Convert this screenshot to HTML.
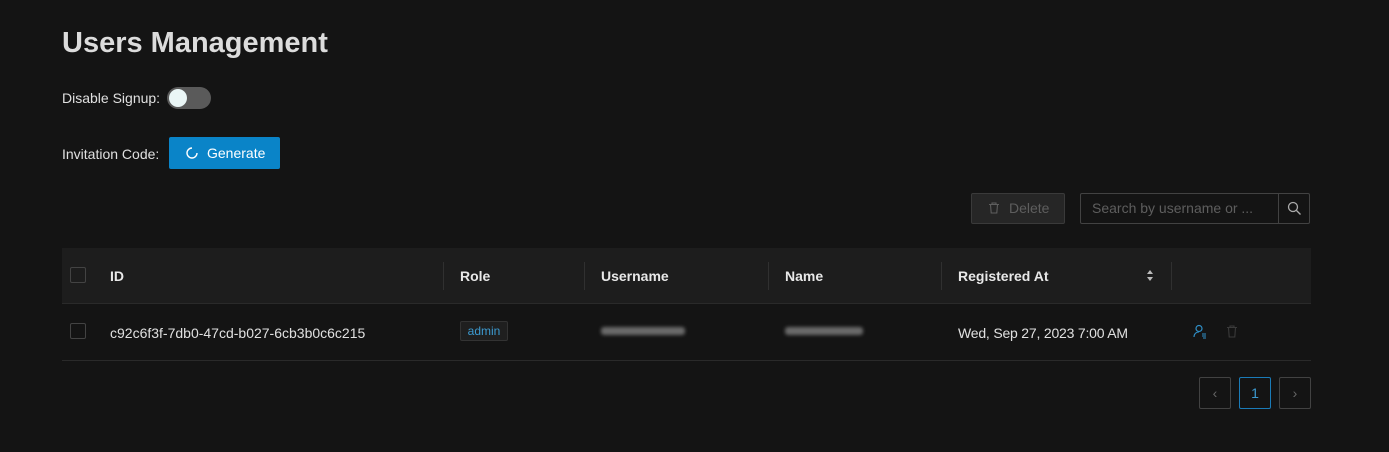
<!DOCTYPE html>
<html><head><style>
body{margin:0;width:1389px;height:452px;background:#141414;font-family:"Liberation Sans",sans-serif;color:#e0e0e0;position:relative;overflow:hidden;font-size:14px}
.a{position:absolute}
.th{position:absolute;top:268px;font-weight:bold;font-size:14px;color:#e8e8e8}
.sep{position:absolute;top:262px;width:1px;height:28px;background:#303030}
.cb{position:absolute;width:14px;height:14px;border:1px solid #434343;border-radius:2px}
.blur{position:absolute;height:8px;background:#6a6a6a;filter:blur(1.8px);border-radius:3px}
.pg{position:absolute;top:377px;width:32px;height:32px;border:1px solid #424242;border-radius:2px;box-sizing:border-box;text-align:center;line-height:30px;color:#666}
</style></head><body>
<div class="a" style="left:62px;top:27px;font-size:29px;font-weight:bold;color:#dcdcdc">Users Management</div>
<div class="a" style="left:62px;top:90px;font-size:14px">Disable Signup:</div>
<div class="a" style="left:167px;top:87px;width:44px;height:22px;border-radius:11px;background:#5a5a5a"><div class="a" style="left:2px;top:2px;width:18px;height:18px;border-radius:50%;background:#eaf6f6"></div></div>
<div class="a" style="left:62px;top:146px">Invitation Code:</div>
<div class="a" style="left:169px;top:137px;width:111px;height:32px;background:#0a84c8;border-radius:2px;color:#fff;line-height:32px">
<svg class="a" style="left:16px;top:9px" width="14" height="14" viewBox="0 0 14 14"><path d="M12 7A5 5 0 1 1 7 2" fill="none" stroke="#fff" stroke-width="1.4"/></svg>
<span class="a" style="left:38px;top:0">Generate</span></div>
<div class="a" style="left:971px;top:193px;width:94px;height:31px;border:1px solid #3a3a3a;background:#262626;box-sizing:border-box;border-radius:2px;color:#5e5e5e;line-height:29px">
<svg class="a" style="left:16px;top:8px" width="12" height="12" viewBox="0 0 12 12"><path d="M1 2.5h10M4 2.5V1h4v1.5M2.5 2.5l.7 8.5h5.6l.7-8.5" fill="none" stroke="#5e5e5e" stroke-width="1.1"/></svg>
<span class="a" style="left:37px">Delete</span></div>
<div class="a" style="left:1080px;top:193px;width:230px;height:31px;border:1px solid #424242;box-sizing:border-box;border-radius:2px;color:#5e5e5e;line-height:29px">
<span class="a" style="left:11px">Search by username or ...</span>
<div class="a" style="left:197px;top:-1px;width:1px;height:31px;background:#424242"></div>
<svg class="a" style="left:206px;top:7px" width="15" height="15" viewBox="0 0 15 15"><circle cx="6" cy="6" r="4.5" fill="none" stroke="#aaa" stroke-width="1.3"/><path d="M9.5 9.5l4 4" stroke="#aaa" stroke-width="1.3"/></svg></div>
<div class="a" style="left:62px;top:248px;width:1249px;height:55px;background:#1d1d1d;border-bottom:1px solid #2a2a2a"></div>
<div class="cb" style="left:70px;top:267px"></div>
<div class="th" style="left:110px">ID</div>
<div class="sep" style="left:443px"></div><div class="th" style="left:460px">Role</div>
<div class="sep" style="left:584px"></div><div class="th" style="left:601px">Username</div>
<div class="sep" style="left:768px"></div><div class="th" style="left:785px">Name</div>
<div class="sep" style="left:941px"></div><div class="th" style="left:958px">Registered At</div>
<svg class="a" style="left:1146px;top:269px" width="8" height="13" viewBox="0 0 8 13"><path d="M4 1L7 5H1zM4 12L1 8h6z" fill="#bbb"/></svg>
<div class="sep" style="left:1171px"></div>
<div class="cb" style="left:70px;top:323px"></div>
<div class="a" style="left:110px;top:325px">c92c6f3f-7db0-47cd-b027-6cb3b0c6c215</div>
<div class="a" style="left:460px;top:321px;width:48px;height:20px;background:#1f1f1f;border:1px solid #333;box-sizing:border-box;border-radius:2px;color:#3c9ad0;font-size:12px;text-align:center;line-height:18px">admin</div>
<div class="blur" style="left:601px;top:327px;width:84px"></div>
<div class="blur" style="left:785px;top:327px;width:78px"></div>
<div class="a" style="left:958px;top:325px;letter-spacing:-0.2px">Wed, Sep 27, 2023 7:00 AM</div>
<svg class="a" style="left:1193px;top:324px" width="14" height="15" viewBox="0 0 14 15"><circle cx="6" cy="4.5" r="3" fill="none" stroke="#2f8fc7" stroke-width="1.2"/><path d="M1 13c0-3 2-5 5-5M9 10h4M9 12h4M10 14h3" fill="none" stroke="#2f8fc7" stroke-width="1.1"/></svg>
<svg class="a" style="left:1226px;top:325px" width="12" height="13" viewBox="0 0 12 13"><path d="M1 2.5h10M4 2.5V1h4v1.5M2.5 2.5l.7 9.5h5.6l.7-9.5" fill="none" stroke="#3a3a3a" stroke-width="1.1"/></svg>
<div class="a" style="left:62px;top:360px;width:1249px;height:1px;background:#2a2a2a"></div>
<div class="pg" style="left:1199px">‹</div>
<div class="pg" style="left:1239px;border-color:#1a7bb8;color:#3c9ad0;background:#141414">1</div>
<div class="pg" style="left:1279px">›</div>
</body></html>
